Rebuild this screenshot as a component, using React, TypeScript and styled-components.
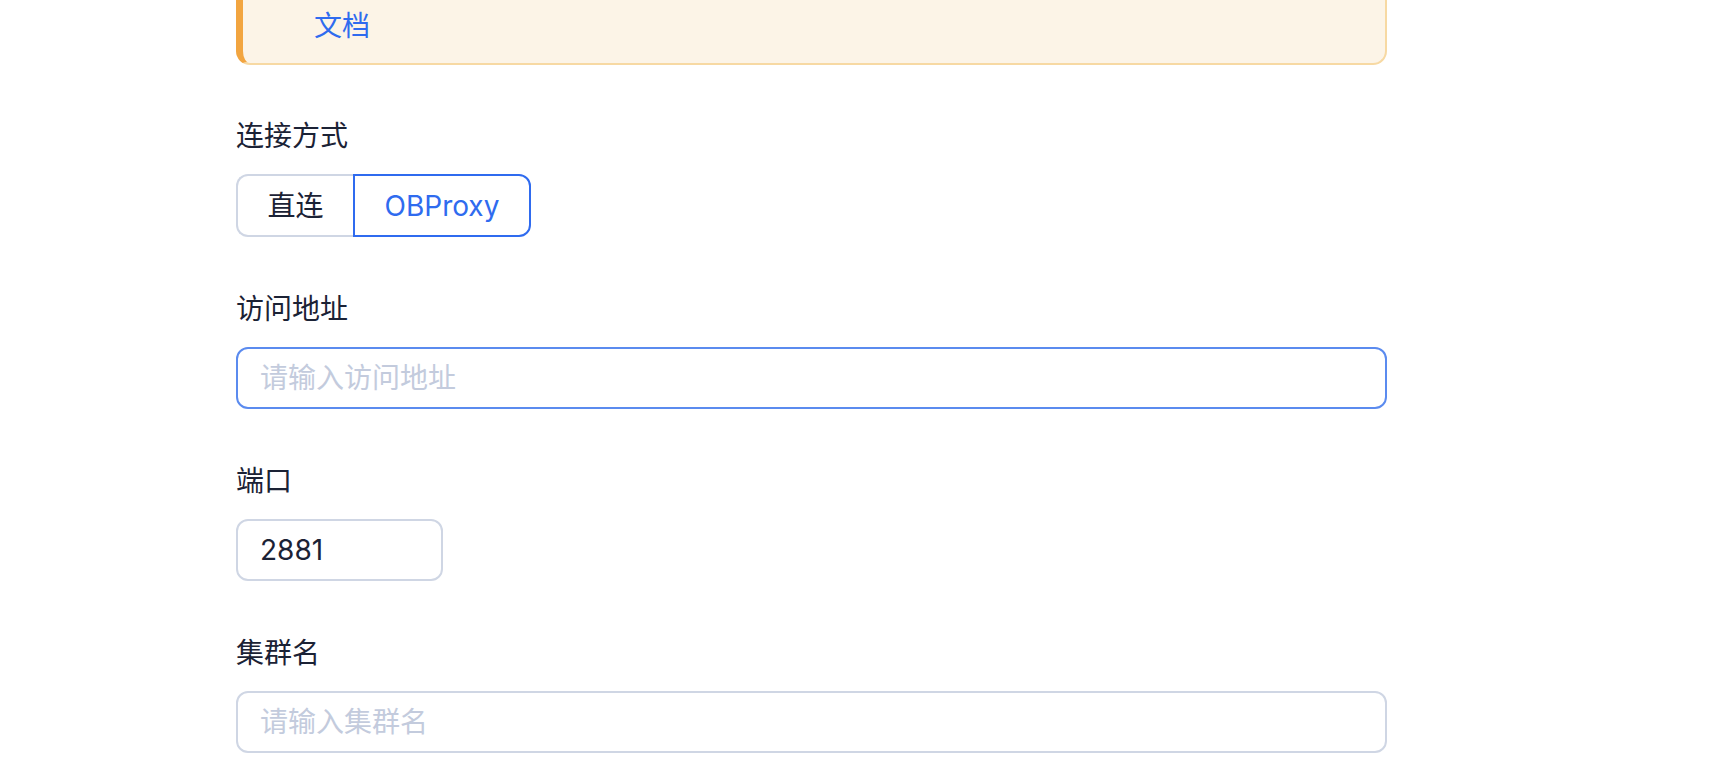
import React from "react";
import styled, { createGlobalStyle } from "styled-components";

const GlobalStyle = createGlobalStyle`
  html, body {
    margin: 0;
    padding: 0;
    background: #ffffff;
  }
  body {
    font-family: Inter, "Noto Sans CJK SC", "Noto Sans", sans-serif;
    color: #1b2235;
    overflow: hidden;
  }
  * { box-sizing: border-box; }
`;

const Page = styled.div`
  position: relative;
  width: 1724px;
  height: 776px;
  overflow: hidden;
`;

const Form = styled.div`
  width: 1151px;
  margin-left: 236px;
  display: flex;
  flex-direction: column;
`;

const Alert = styled.div`
  background: #fcf4e7;
  border-left: 7px solid #f2a540;
  border-right: 2px solid #f7d9a3;
  border-bottom: 2px solid #f7d9a3;
  border-radius: 0 0 14px 14px;
  padding: 6px 0 17px 71px;
  margin-bottom: 51px;
`;

const DocLink = styled.a`
  font-size: 28px;
  line-height: 40px;
  color: #2f6bef;
  text-decoration: none;
`;

const Field = styled.div`
  display: flex;
  flex-direction: column;
  margin-bottom: 52px;
`;

const Label = styled.label`
  font-size: 28px;
  line-height: 40px;
  color: #1b2235;
  margin-bottom: 18px;
`;

const Segmented = styled.div`
  display: flex;
  height: 63px;
`;

const SegButton = styled.button<{ $active?: boolean; $first?: boolean; $last?: boolean }>`
  height: 100%;
  padding: 0 29.5px;
  font-family: inherit;
  font-size: 28px;
  line-height: 40px;
  background: #ffffff;
  cursor: pointer;
  color: ${(p) => (p.$active ? "#2f6bef" : "#1b2235")};
  border: 2px solid ${(p) => (p.$active ? "#2f6bef" : "#cfd6e4")};
  ${(p) => (p.$active ? "" : "border-right: none;")}
  border-radius: ${(p) => (p.$first ? "12px 0 0 12px" : p.$last ? "0 12px 12px 0" : "0")};
`;

const Input = styled.input<{ $focused?: boolean; $width?: string }>`
  height: 62px;
  width: ${(p) => p.$width || "100%"};
  padding: 0 22px;
  font-family: inherit;
  font-size: 28px;
  color: #1b2235;
  background: #ffffff;
  border: 2px solid ${(p) => (p.$focused ? "#5b8bef" : "#cfd6e4")};
  border-radius: 12px;
  outline: none;
  &::placeholder {
    color: #c3cbdd;
  }
`;

const Watermark = styled.span<{ $x: number; $y: number }>`
  position: absolute;
  left: ${(p) => p.$x}px;
  top: ${(p) => p.$y}px;
  font-family: "Liberation Sans", Arial, sans-serif;
  font-size: 44px;
  line-height: 1;
  color: rgba(0, 0, 0, 0.025);
  transform: rotate(-21deg);
  transform-origin: 0 100%;
  white-space: nowrap;
  pointer-events: none;
`;

export default function App() {
  return (
    <Page>
      <GlobalStyle />
      <Form>
        <Alert>
          <DocLink href="#">文档</DocLink>
        </Alert>

        <Field>
          <Label>连接方式</Label>
          <Segmented>
            <SegButton $first>直连</SegButton>
            <SegButton $active $last>OBProxy</SegButton>
          </Segmented>
        </Field>

        <Field>
          <Label>访问地址</Label>
          <Input $focused placeholder="请输入访问地址" />
        </Field>

        <Field>
          <Label>端口</Label>
          <Input $width="207px" defaultValue="2881" />
        </Field>

        <Field>
          <Label>集群名</Label>
          <Input placeholder="请输入集群名" />
        </Field>
      </Form>
      <Watermark $x={517} $y={140}>pc-036436</Watermark>
      <Watermark $x={1572} $y={466}>pc-036436</Watermark>
      <Watermark $x={745} $y={758}>pc-036436</Watermark>
    </Page>
  );
}
